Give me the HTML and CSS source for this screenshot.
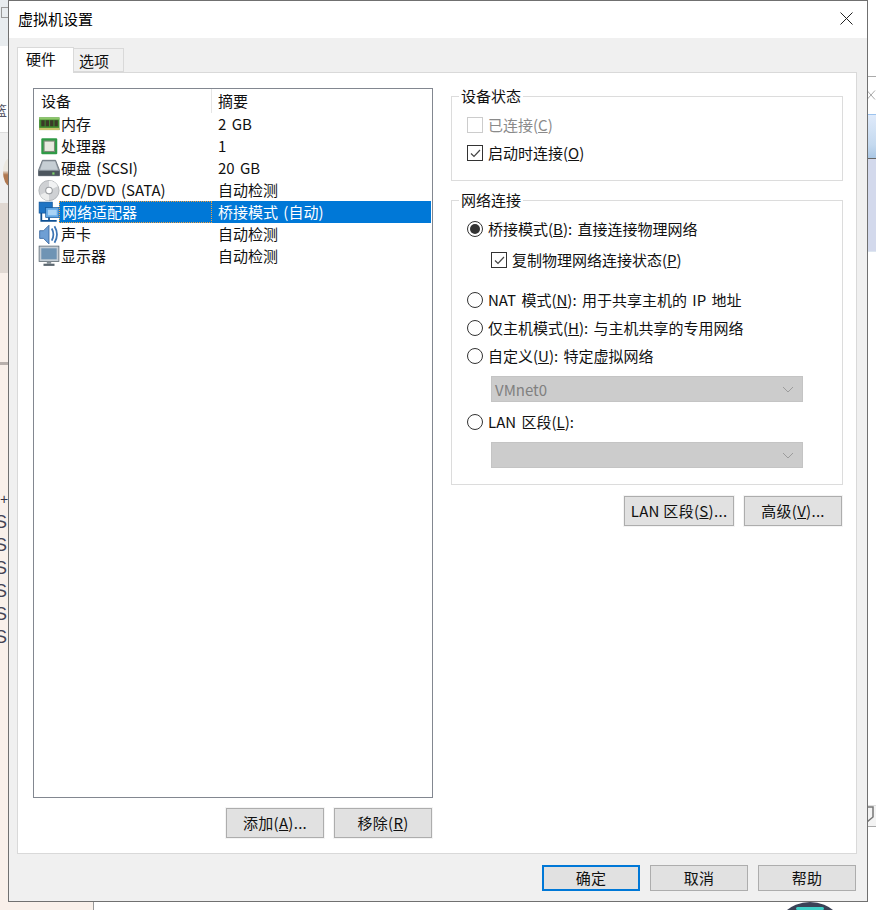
FILE: index.html
```html
<!DOCTYPE html>
<html lang="zh-CN">
<head>
<meta charset="utf-8">
<title>虚拟机设置</title>
<link rel="stylesheet" href="styles.css">
</head>
<body>
<div class="desktop">
  <div class="bg-left">
    <div class="bg-l-top"><span class="bg-box"></span></div>
    <div class="bg-l-white"><span class="bg-text">篮</span></div>
    <div class="bg-l-grey"><span class="bg-avatar"></span></div>
    <div class="bg-l-taupe"></div>
    <div class="bg-l-peach">
      <span class="bg-dash"></span>
      <div class="bg-list">+<br><i>S</i><br><i>S</i><br><i>S</i><br><i>S</i><br><i>S</i><br><i>S</i></div>
    </div>
  </div>
  <div class="bg-right">
    <div class="bg-r-a"></div>
    <div class="bg-r-x"><svg width="9" height="10" viewBox="0 0 9 10"><path d="M0 .5l8 9M8 .5l-8 9" stroke="#aaa" fill="none"/></svg></div>
    <div class="bg-r-b"></div>
    <div class="bg-r-c"></div>
    <div class="bg-r-d"></div>
    <div class="bg-r-e"><svg width="9" height="18" viewBox="0 0 9 18"><path d="M0 1h6v10l-6 5" stroke="#777" stroke-width="1.500" fill="none"/></svg></div>
    <div class="bg-r-f"></div>
  </div>
  <div class="bg-bottom"><span class="bg-peach-b"></span><span class="bg-circle"><span class="bg-teal"></span></span></div>

  <main class="dialog">
    <header class="titlebar">
      <span class="title">虚拟机设置</span>
      <svg class="close" width="13" height="13" viewBox="0 0 13 13"><path d="M.5.5l12 12M12.500.5l-12 12" stroke="#222" fill="none"/></svg>
    </header>
    <div class="body">
      <div class="tabs">
        <div class="tab active">硬件</div>
        <div class="tab">选项</div>
      </div>
      <div class="tabpanel">
        <div class="left">
          <div class="list">
            <div class="list-head"><div class="c1">设备</div><div class="c2">摘要</div></div>
            <div class="row"><svg class="ico" viewBox="0 0 20 20"><rect x="1" y="4" width="18.500" height="11.500" fill="#3d8a2e"/><rect x="1" y="4" width="18.500" height="2" fill="#8fc76a"/><path d="M3 6.500h3v5.500H3zM7 6.500h3v5.500H7zM11 6.500h3v5.500h-3zM15 6.500h3v5.500h-3z" fill="#3b3a28"/><rect x="1" y="13.500" width="18.500" height="2" fill="#c9c36b"/></svg><div class="c1t">内存</div><div class="c2t">2 GB</div></div>
            <div class="row"><svg class="ico" viewBox="0 0 20 20"><rect x="3" y="3" width="14.500" height="14.500" fill="#2f9a46" rx="1"/><rect x="5.500" y="5.500" width="9.500" height="9.500" fill="#e8eae0" stroke="#7f8a78"/></svg><div class="c1t">处理器</div><div class="c2t">1</div></div>
            <div class="row"><svg class="ico" viewBox="0 0 20 20"><path d="M4 3h12l3.500 9v5H.500v-5z" fill="#9aa3ab" stroke="#5d6670" stroke-width=".7"/><path d="M4.500 4h11l2.500 7.500H2z" fill="#c6ced4"/><rect x=".5" y="12.500" width="19" height="4.500" fill="#4d565e"/><rect x="13" y="14" width="2" height="2" fill="#7fd46a"/></svg><div class="c1t">硬盘 (SCSI)</div><div class="c2t">20 GB</div></div>
            <div class="row"><svg class="ico" viewBox="0 0 20 20"><circle cx="10" cy="10.500" r="9.200" fill="#cfd1d4" stroke="#a3a6aa" stroke-width=".7"/><path d="M10 1.500a9 9 0 0 1 8 5l-8 4z" fill="#f1f2f3"/><path d="M10 19.500a9 9 0 0 1-8-5l8-4z" fill="#eceded"/><circle cx="10" cy="10.500" r="3" fill="#fff" stroke="#9b9ea2"/></svg><div class="c1t">CD/DVD (SATA)</div><div class="c2t">自动检测</div></div>
            <div class="row sel"><svg class="ico" viewBox="0 0 20 20"><rect x="1" y="1" width="12" height="10" fill="#1f74c4" stroke="#0d4f92" stroke-width=".6"/><rect x="7" y="6" width="12" height="9" fill="#62a8e6" stroke="#0d4f92" stroke-width=".6"/><rect x="9" y="8" width="8" height="5" fill="#a9d3f5"/><path d="M3 11v7h14M10 15v3" stroke="#0d4f92" stroke-width="1.600" fill="none"/></svg><div class="c1t"><span class="focus">网络适配器</span></div><div class="c2t">桥接模式 (自动)</div></div>
            <div class="row"><svg class="ico" viewBox="0 0 20 20"><path d="M1.500 7h3.500l5-5v17l-5-5H1.500z" fill="#6f9fd4" stroke="#2f5f9a" stroke-width=".7"/><path d="M12.500 5q3 5.500 0 11M15 3q4.500 7.500 0 15" stroke="#3d75b4" stroke-width="1.600" fill="none"/></svg><div class="c1t">声卡</div><div class="c2t">自动检测</div></div>
            <div class="row"><svg class="ico" viewBox="0 0 20 20"><rect x="1" y="1" width="18" height="14" fill="#c5ced6" stroke="#59656f" stroke-width=".7"/><rect x="3" y="3" width="14" height="10" fill="#6f94b4"/><rect x="8" y="15" width="4" height="2" fill="#848e96"/><rect x="5" y="17" width="10" height="2" fill="#5b666f"/></svg><div class="c1t">显示器</div><div class="c2t">自动检测</div></div>
          </div>
          <div class="list-btns">
            <button class="btn w98">添加(<u>A</u>)...</button>
            <button class="btn w98">移除(<u>R</u>)</button>
          </div>
        </div>
        <div class="right">
          <fieldset class="group g-status">
            <legend>设备状态</legend>
            <label class="opt disabled"><span class="check"></span>已连接(<u>C</u>)</label>
            <label class="opt"><span class="check on"><svg width="11" height="9" viewBox="0 0 11 9"><path d="M1 4.500l3 3 6-6.500" stroke="#444" stroke-width="1.200" fill="none"/></svg></span>启动时连接(<u>O</u>)</label>
          </fieldset>
          <fieldset class="group g-net">
            <legend>网络连接</legend>
            <label class="opt"><span class="radio on"></span>桥接模式(<u>B</u>): 直接连接物理网络</label>
            <label class="opt sub"><span class="check on"><svg width="11" height="9" viewBox="0 0 11 9"><path d="M1 4.500l3 3 6-6.500" stroke="#444" stroke-width="1.200" fill="none"/></svg></span>复制物理网络连接状态(<u>P</u>)</label>
            <label class="opt nat"><span class="radio"></span>NAT 模式(<u>N</u>): 用于共享主机的 IP 地址</label>
            <label class="opt host"><span class="radio"></span>仅主机模式(<u>H</u>): 与主机共享的专用网络</label>
            <label class="opt host"><span class="radio"></span>自定义(<u>U</u>): 特定虚拟网络</label>
            <div class="select s1"><span>VMnet0</span><svg width="12" height="7" viewBox="0 0 12 7"><path d="M1 1l5 5 5-5" stroke="#9c9c9c" fill="none"/></svg></div>
            <label class="opt lan"><span class="radio"></span>LAN 区段(<u>L</u>):</label>
            <div class="select s2"><span></span><svg width="12" height="7" viewBox="0 0 12 7"><path d="M1 1l5 5 5-5" stroke="#9c9c9c" fill="none"/></svg></div>
          </fieldset>
          <div class="right-btns">
            <button class="btn w110">LAN 区段(<u>S</u>)...</button>
            <button class="btn w98">高级(<u>V</u>)...</button>
          </div>
        </div>
      </div>
      <footer class="footer">
        <button class="btn w98 tall primary">确定</button>
        <button class="btn w98 tall">取消</button>
        <button class="btn w98 tall">帮助</button>
      </footer>
    </div>
  </main>
</div>
</body>
</html>
```
FILE: styles.css
```css
* { box-sizing: border-box; }
html, body { margin: 0; padding: 0; }
body {
  width: 876px; height: 910px; overflow: hidden; background: #fff;
  font-family: "Noto Sans CJK SC", "Liberation Sans", sans-serif;
  font-size: 15px; color: #111; word-spacing: 2px;
}
.desktop { position: relative; width: 876px; height: 910px; overflow: hidden; }

/* what shows of the windows behind the dialog */
.bg-left { position: absolute; left: 0; top: 0; width: 9px; height: 910px; display: flex; flex-direction: column; }
.bg-l-top { height: 46px; background: #e8ecef; position: relative; flex: none; }
.bg-box { position: absolute; left: 1px; top: 7px; width: 8px; height: 11px; border: 1px solid #999; }
.bg-l-white { height: 87px; background: #fff; overflow: hidden; border-bottom: 1px solid #ddd; flex: none; }
.bg-text { display: block; margin: 52px 0 0 -7px; font-size: 14px; line-height: 24px; color: #556; }
.bg-l-grey { height: 70px; background: #f0f0f0; position: relative; flex: none; overflow: hidden; }
.bg-avatar { position: absolute; left: 3px; top: 25px; width: 14px; height: 28px; border-radius: 50%; background: linear-gradient(#ece8e0 0 45%, #b07850 60%); }
.bg-l-taupe { height: 70px; background: #e0d8d2; flex: none; }
.bg-l-peach { flex: 1; background: #f9f0ea; position: relative; }
.bg-dash { position: absolute; left: 0; top: 89px; width: 9px; height: 3px; background: #b8b0ac; }
.bg-list { position: absolute; left: 0; top: 215px; width: 9px; overflow: hidden; font: 14px/22px "Liberation Sans", sans-serif; color: #334; }
.bg-list i { font-style: normal; display: inline-block; margin-left: -5px; font-size: 18px; line-height: 22px; position: relative; top: 1px; color: #445; }
.bg-right { position: absolute; left: 867px; top: 0; width: 9px; height: 901px; display: flex; flex-direction: column; background: #fff; }
.bg-r-a { height: 77px; border-bottom: 1px solid #aaa; flex: none; }
.bg-r-x { height: 37px; padding-top: 13px; flex: none; display: flex; align-items: flex-start; }
.bg-r-b { height: 45px; background: linear-gradient(#dfeafa, #c4d9ef 70%, #a9c6e4); border-top: 1px solid #9cc3ee; border-bottom: 1px solid #666; flex: none; }
.bg-r-c { height: 93px; background: #d3d9ec; border-bottom: 1px solid #dde6f0; flex: none; }
.bg-r-d { height: 553px; flex: none; }
.bg-r-e { height: 22px; background: #f3f3f3; border-top: 1px solid #ddd; border-bottom: 1px solid #aaa; flex: none; display: flex; }
.bg-r-f { flex: 1; }
.bg-bottom { position: absolute; left: 0; top: 901px; width: 876px; height: 9px; overflow: hidden; }
.bg-peach-b { position: absolute; left: 0; top: 0; width: 94px; height: 9px; background: #f9f0ea; border-right: 1px solid #999; }
.bg-circle { position: absolute; left: 773px; top: 1px; width: 74px; height: 74px; border-radius: 50%; background: #3b4257; }
.bg-teal { position: absolute; left: 23px; top: 5px; width: 28px; height: 3px; border-radius: 2px; background: #3fd0c8; }

/* dialog */
.dialog {
  position: absolute; left: 8px; top: 0; width: 860px; height: 902px;
  border: 1px solid #707070; background: #f0f0f0;
  display: flex; flex-direction: column;
}
.titlebar { height: 37px; background: #fff; display: flex; align-items: center; justify-content: space-between; padding: 0 14px 2px 9px; flex: none; }
.title { font-size: 15px; line-height: 20px; color: #000; }
.body { flex: 1; display: flex; flex-direction: column; padding: 9px 10px 0 8px; min-height: 0; }
.tabs { display: flex; height: 25px; flex: none; position: relative; align-items: flex-end; }
.tab { width: 50px; height: 24px; background: #f0f0f0; border: 1px solid #d9d9d9; border-left: 0; padding-left: 5px; line-height: 24px; }
.tab.active { width: 57px; height: 26px; background: #fff; border: 1px solid #d9d9d9; border-bottom: 0; padding-left: 8px; line-height: 21px; position: relative; z-index: 1; margin-bottom: -1px; }
.tabpanel { flex: none; height: 782px; background: #fff; border: 1px solid #d9d9d9; display: flex; padding: 15px 13px 15px 15px; }
.left { width: 400px; flex: none; display: flex; flex-direction: column; }
.list { height: 710px; border: 1px solid #828790; background: #fff; flex: none; padding: 0; }
.list-head { display: flex; height: 24px; line-height: 24px; }
.c1 { width: 178px; padding-left: 7px; border-right: 1px solid #e5e5e5; height: 24px; }
.c2 { padding-left: 6px; }
.row { display: flex; align-items: center; height: 22px; position: relative; white-space: nowrap; }
.ico { width: 22px; height: 22px; flex: none; margin-left: 4px; margin-right: -1px; }
.c1t { width: 153px; padding-left: 2px; flex: none; height: 22px; line-height: 22px; }
.c2t { padding-left: 6px; flex: 1; line-height: 22px; height: 22px; color: #111; }
.sel .c1t { background: #0078d7; color: #fff; padding-left: 0; }
.focus { display: block; height: 22px; padding-left: 3px; outline: 1px dotted #f0a040; outline-offset: -1px; }
.sel .c2t { background: #0078d7; color: #fff; margin-right: 1px; }
.list-btns { display: flex; justify-content: flex-end; gap: 10px; margin-top: 10px; padding-right: 1px; }
.btn {
  font: inherit; height: 30px; padding: 0; background: #e1e1e1; color: #111; letter-spacing: .3px;
  border: 1px solid #adadad; outline: 1px solid #f4f4f4; line-height: 26px; white-space: nowrap;
}
.w98 { width: 98px; }
.w110 { width: 110px; }
.right { margin-left: 18px; width: 392px; flex: none; display: flex; flex-direction: column; }
.group { margin: 0; border: 1px solid #dcdcdc; padding: 0; min-width: 0; display: block; }
.group legend { padding: 0 2px; margin-left: -8px; line-height: 16px; height: 16px; }
.g-status { height: 93px; padding: 11px 0 0 15px; }
.g-net { height: 293px; margin-top: 11px; padding: 11px 0 0 15px; }
.opt { display: flex; align-items: center; height: 20px; line-height: 20px; white-space: pre; }
.opt.disabled { color: #8a8a8a; }
.g-status .opt + .opt { margin-top: 8px; }
.sub { margin-left: 24px; margin-top: 11px; }
.nat { margin-top: 20px; }
.host { margin-top: 8px; }
.lan { margin-top: 10px; }
.check { width: 16px; height: 16px; border: 1px solid #333; background: #fff; margin-right: 5px; flex: none; display: flex; align-items: center; justify-content: center; }
.disabled .check { border-color: #ccc; }
.radio { width: 16px; height: 16px; border: 1px solid #333; border-radius: 50%; background: #fff; margin-right: 5px; flex: none; position: relative; }
.radio.on::after { content: ""; position: absolute; left: 2px; top: 2px; width: 10px; height: 10px; border-radius: 50%; background: #333; }
.select { height: 26px; margin-left: 24px; width: 312px; background: #ccc; border: 1px solid #c4c4c4; color: #808080; display: flex; align-items: center; justify-content: space-between; padding: 0 8px 0 3px; }
.s1 { margin-top: 10px; }
.s2 { margin-top: 10px; }
.right-btns { display: flex; justify-content: flex-end; gap: 10px; margin-top: 11px; padding-right: 1px; }
.footer { display: flex; justify-content: flex-end; gap: 10px; padding: 11px 1px 0 0; }
.tall { height: 26px; outline: none; line-height: 22px; }
.primary { border: 2px solid #0078d7; }
```
